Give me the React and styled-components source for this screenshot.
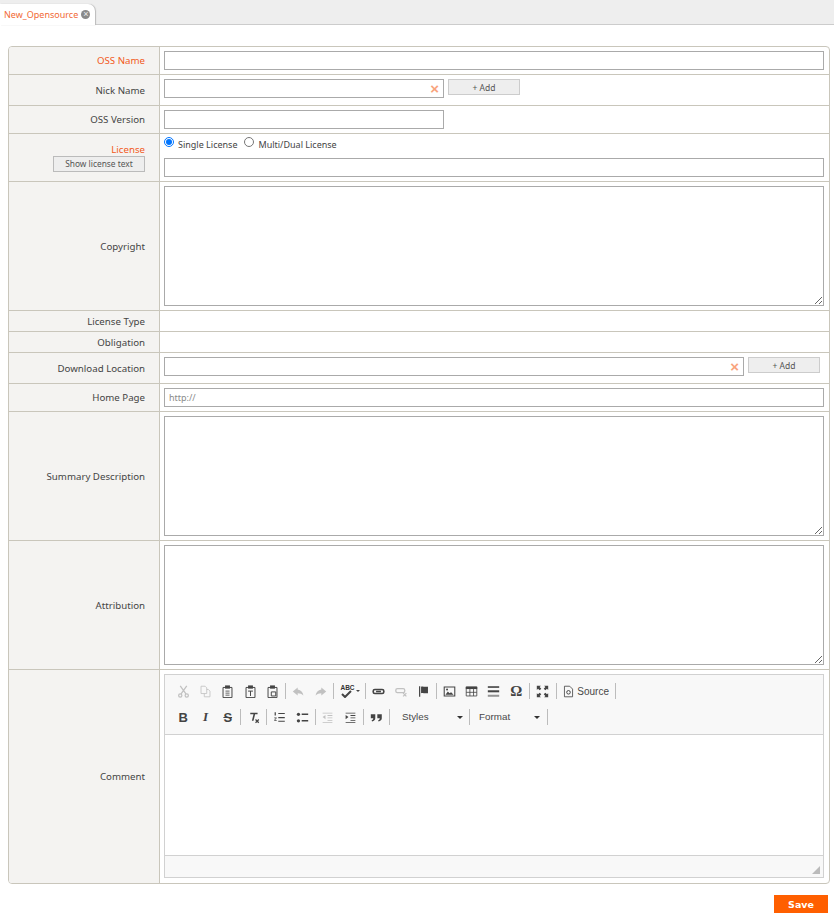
import React from "react";
import styled, { createGlobalStyle } from "styled-components";

const Global = createGlobalStyle`
  html, body { margin: 0; padding: 0; background: #fff; }
  body { font-family: "Noto Sans", Verdana, sans-serif; font-size: 10px; color: #444; height: 918px; overflow: hidden; }
`;

const TabBar = styled.div`
  height: 24px; background: #eee; border-bottom: 1px solid #ccc; display: flex; align-items: flex-end;
`;
const Tab = styled.div`
  width: 95px; height: 21px; background: #fff; border-radius: 0 7px 0 0; display: flex; align-items: center;
  gap: 3px; padding-left: 4px; box-sizing: border-box; margin-bottom: -1px; color: #f26a35; font-family: "Noto Sans", sans-serif; font-size: 9px;
  box-shadow: 1px 0 1px #bbb; white-space: nowrap;
`;
const TabClose = styled.span`
  width: 9px; height: 9px; flex: none; border-radius: 50%; background: #8a8a8a; color: #eee; font: 9px/9px "Liberation Sans", sans-serif; text-align: center;
`;

const Card = styled.div`
  margin: 21px 4px 0 8px; border: 1px solid #c9c6bb; border-radius: 4px; overflow: hidden;
`;
const Row = styled.div`
  display: grid; grid-template-columns: 151px 1fr; height: ${p => p.$h}px;
  border-bottom: ${p => (p.$last ? "0" : "1px solid #c9c6bb")};
`;
const Label = styled.div`
  background: #f4f3f1; border-right: 1px solid #c9c6bb; color: ${p => (p.$req ? "#f25a1c" : "#444")};
  display: flex; flex-direction: column; justify-content: center; align-items: flex-end; padding-right: 14px;
  white-space: nowrap; font-family: "Noto Sans", sans-serif; font-size: 9.7px;
`;
const Value = styled.div`
  padding: ${p => p.$pt ?? 4}px 5px 0 4px; display: flex; align-items: flex-start; gap: 4px; flex-wrap: wrap; align-content: flex-start;
`;
const Input = styled.input`
  box-sizing: border-box; height: 19px; width: ${p => (p.$w ? p.$w + "px" : "100%")}; border: 1px solid #aaa; padding: 0 4px; margin: 0;
  font: 9px "Noto Sans", sans-serif; background: #fff; color: #444;
  &::placeholder { color: #8a8a8a; opacity: 1; }
`;
const InputWrap = styled.div`
  position: relative; width: ${p => p.$w}px; height: 19px;
`;
const ClearX = styled.span`
  position: absolute; right: 5px; top: 2px; color: #f9a47d; font: bold 15px/15px "Liberation Sans", sans-serif;
`;
const AddBtn = styled.button`
  box-sizing: border-box; width: 72px; height: 16px; background: #eee; border: 1px solid #ccc; color: #555; padding: 0;
  font: 8.5px "Noto Sans", sans-serif;
`;
const ShowBtn = styled.button`
  box-sizing: border-box; width: 92px; height: 16px; background: #eee; border: 1px solid #bbb; color: #555; padding: 0; margin-bottom: 1px;
  font: 8.4px "Noto Sans", sans-serif;
`;
const RadioLine = styled.div`
  width: 100%; height: 20px; display: flex; align-items: center; font: 9px "Noto Sans", sans-serif; color: #444;
`;
const Radio = styled.input.attrs({ type: "radio", name: "lic" })`
  margin: 0 4px 4px 0; width: 10px; height: 10px; flex: none;
`;
const RadioText = styled.span`
  margin-right: 7px;
`;
const Area = styled.textarea`
  box-sizing: border-box; display: block; width: 100%; height: 120px; border: 1px solid #aaa; margin: 0; padding: 2px; background: #fff;
`;

const Editor = styled.div`
  box-sizing: border-box; width: 100%; height: 204px; border: 1px solid #d1d1d1; display: flex; flex-direction: column;
`;
const Toolbar = styled.div`
  height: 60px; box-sizing: border-box; background: #f8f8f8; border-bottom: 1px solid #d1d1d1; padding: 3px 0 0 7px;
`;
const TRow = styled.div`
  display: flex; align-items: center; height: 26px;
`;
const Btn = styled.span`
  width: ${p => p.$w || 22.3}px; height: 22px; display: flex; align-items: center; justify-content: center; flex: none;
  opacity: ${p => (p.$off ? 0.3 : 1)}; color: #333;
`;
const SourceBtn = styled(Btn)`
  justify-content: flex-start; padding-left: 4px; box-sizing: border-box; gap: 2px; font: 10px "Liberation Sans", sans-serif; color: #484848;
`;
const Sep = styled.span`
  width: 1px; height: 16px; background: #bcbcbc; margin: 0 1.2px 0 1.5px; flex: none;
`;
const Combo = styled.span`
  width: ${p => p.$w}px; height: 22px; display: flex; align-items: center; justify-content: space-between; padding: 0 ${p => p.$pr}px 2px ${p => p.$pl}px; box-sizing: border-box; flex: none;
  font: 9.8px "Liberation Sans", sans-serif; color: #484848;
  &::after { content: ""; border: 3px solid transparent; border-top-color: #333; border-bottom: 0; margin-top: 2px; }
`;
const EditBody = styled.div`
  flex: 1; background: #fff;
`;
const EditFoot = styled.div`
  box-sizing: border-box; height: 22px; background: #f8f8f8; border-top: 1px solid #d1d1d1; position: relative;
`;
const Grip = styled.span`
  position: absolute; right: 3px; bottom: 3px; width: 0; height: 0; border-left: 8px solid transparent; border-bottom: 8px solid #bbb;
`;
const Footer = styled.div`
  display: flex; justify-content: flex-end; padding: 11px 6px 0 0;
`;
const Save = styled.button`
  width: 54px; height: 18px; background: #ff5f00; color: #fff; border: 0; padding: 0; font: bold 9.5px "DejaVu Sans", sans-serif;
`;

const I = ({ children, s = 13 }) => <svg width={s} height={s} viewBox="0 0 16 16" fill="#444" stroke="none">{children}</svg>;
const Line = p => <path fill="none" stroke="#444" {...p} />;

const icons = {
  cut: <><Line d="M4 1l7 10M12 1L5 11" strokeWidth="1.5" /><circle cx="4" cy="13" r="2" fill="none" stroke="#444" strokeWidth="1.5" /><circle cx="12" cy="13" r="2" fill="none" stroke="#444" strokeWidth="1.5" /></>,
  copy: <Line d="M2.500 1.500h5l2 2v7h-7zM9.500 5.500h2l2 2v7h-7v-4" />,
  paste: <><Line d="M2.500 3h11v12.500h-11z" strokeWidth="1.200" /><path d="M5 .5h6v4H5z" /><Line d="M5.500 7.500h5M5.500 10h5M5.500 12.500h5" /></>,
  pasteT: <><Line d="M2.500 3h11v12.500h-11z" strokeWidth="1.200" /><path d="M5 .5h6v4H5z" /><Line d="M5 7.500h6M8 7.500v6" strokeWidth="1.200" /></>,
  pasteW: <><Line d="M2.500 3h11v12.500h-11z" strokeWidth="1.200" /><path d="M5 .5h6v4H5z" /><Line d="M6.500 8.500h5.500v5h-5.500z" strokeWidth="1.200" /></>,
  undo: <path d="M7 3L1 8l6 5v-3c3 0 5 1 7 3-.5-4-3-7-7-7.500z" />,
  redo: <path d="M9 3l6 5-6 5v-3c-3 0-5 1-7 3 .5-4 3-7 7-7.500z" />,
  link: <><rect x="1.500" y="5.500" width="13" height="5" rx="2" fill="none" stroke="#444" strokeWidth="2" /><path d="M5 7h6v2H5z" /></>,
  unlink: <><rect x="1" y="4.500" width="11" height="5" rx="2" fill="none" stroke="#444" strokeWidth="1.600" /><Line d="M10 10l4 4M14 10l-4 4" strokeWidth="1.500" /></>,
  flag: <><path d="M2.500 1.500h1.500v13H2.500z" /><path d="M5 2c2-1 4 1 8.500 0v8c-4.500 1-6.500-1-8.500 0z" /></>,
  image: <><Line d="M1.500 2.500h13v11h-13z" strokeWidth="1.300" /><path d="M3 12l3-4 2 2 2-1 3 3z" /><circle cx="5" cy="5.500" r="1.200" /></>,
  table: <><path d="M1 2h14v3H1z" /><Line d="M1.500 2.500h13v11h-13zM1.500 9h13M6 5v8.500M10.500 5v8.500" /></>,
  hr: <><path d="M1 1.500h14v2H1z" /><path d="M1 6.500h14v2.500H1z" /><path d="M1 12h14v2.500H1z" opacity=".55" /></>,
  max: <path d="M1 1h5L4.500 2.500 6.500 4.500 4.500 6.500 2.500 4.500 1 6zM15 1v5l-1.500-1.500-2 2-2-2 2-2L10 1zM1 15v-5l1.500 1.500 2-2 2 2-2 2L6 15zM15 15h-5l1.500-1.500-2-2 2-2 2 2L15 10z" />,
  src: <><Line d="M3 1.500h6.500l3.500 3.500v9.500H3z" /><circle cx="8" cy="9" r="2.200" fill="none" stroke="#444" strokeWidth="1.200" /></>,
  clear: <><path d="M4 2h9v2H10L8 12H6l2-8H4z" /><Line d="M10.500 10.500l4 4M14.500 10.500l-4 4" strokeWidth="1.500" /></>,
  ol: <><path d="M2 1.500h1.500v4H2zM1.500 8h3v1l-2 2h2v1h-3v-1l2-2h-2z" /><path d="M6.500 2.500h8v1.300h-8zM6.500 7.500h8v1.300h-8zM6.500 12h8v1.300h-8z" /></>,
  ul: <><circle cx="3" cy="4" r="2" /><circle cx="3" cy="12" r="2" /><path d="M7 3h8v2H7zM7 11h8v2H7z" /></>,
  outdent: <path d="M2 2h12v1H2zM8 5h6v1H8zM8 8h6v1H8zM8 11h6v1H8zM2 13.500h12v1H2zM5.500 5v5L2 7.500z" />,
  indent: <path d="M2 2h12v1H2zM8 5h6v1H8zM8 8h6v1H8zM8 11h6v1H8zM2 13.500h12v1H2zM2 5v5l3.500-2.500z" />,
  quote: <path d="M1 4h5.500v5c0 2-1.500 3.500-4 4l-.5-1.500c1.500-.5 2-1 2-2.500H1zM9 4h5.500v5c0 2-1.500 3.500-4 4l-.5-1.500c1.500-.5 2-1 2-2.500H9z" />,
};

const Ic = ({ n, off, w }) => <Btn $off={off} $w={w}><I>{icons[n]}</I></Btn>;
const Glyph = styled(Btn)`
  font: ${p => p.$f} ${p => p.$size || 13}px "Liberation ${p => p.$fam || "Sans"}", sans-serif; color: #444;
  text-decoration: ${p => (p.$strike ? "line-through" : "none")};
`;
const Spell = styled(Btn)`
  position: relative; font: bold 6.5px "Liberation Sans", sans-serif; justify-content: flex-start; padding-left: 5px; box-sizing: border-box;
  align-items: flex-start; padding-top: 4px;
  &::after { content: ""; position: absolute; right: 4px; top: 10px; border: 2.5px solid transparent; border-top-color: #444; border-bottom: 0; }
`;
const Check = styled.svg`
  position: absolute; left: 6px; top: 10px;
`;

const Field = ({ label, req, h, children, pt, last }) => (
  <Row $h={h} $last={last}>
    <Label $req={req}>{label}</Label>
    <Value $pt={pt}>{children}</Value>
  </Row>
);

export default function App() {
  return (
    <>
      <Global />
      <TabBar>
        <Tab>New_Opensource<TabClose>×</TabClose></Tab>
      </TabBar>
      <Card>
        <Field label="OSS Name" req h={27}><Input /></Field>
        <Field label="Nick Name" h={30}>
          <InputWrap $w={280}><Input /><ClearX>×</ClearX></InputWrap>
          <AddBtn>+ Add</AddBtn>
        </Field>
        <Field label="OSS Version" h={27}><Input $w={280} /></Field>
        <Row $h={47}>
          <Label $req>
            <span>License</span>
            <ShowBtn>Show license text</ShowBtn>
          </Label>
          <Value $pt={0}>
            <RadioLine>
              <Radio defaultChecked /><RadioText>Single License</RadioText>
              <Radio /><RadioText>Multi/Dual License</RadioText>
            </RadioLine>
            <Input />
          </Value>
        </Row>
        <Field label="Copyright" h={128}><Area /></Field>
        <Field label="License Type" h={20} />
        <Field label="Obligation" h={20} />
        <Field label="Download Location" h={30}>
          <InputWrap $w={580}><Input /><ClearX>×</ClearX></InputWrap>
          <AddBtn>+ Add</AddBtn>
        </Field>
        <Field label="Home Page" h={27}><Input placeholder="http://" /></Field>
        <Field label="Summary Description" h={128}><Area /></Field>
        <Field label="Attribution" h={128}><Area /></Field>
        <Field label="Comment" h={213} last>
          <Editor>
            <Toolbar>
              <TRow>
                <Ic n="cut" off /><Ic n="copy" off /><Ic n="paste" /><Ic n="pasteT" /><Ic n="pasteW" /><Sep />
                <Ic n="undo" off /><Ic n="redo" off /><Sep />
                <Spell $w={28.500}>ABC<Check width="12" height="8" viewBox="0 0 12 8"><path d="M1 4l3 3 6-6" fill="none" stroke="#444" strokeWidth="2" /></Check></Spell><Sep />
                <Ic n="link" /><Ic n="unlink" off /><Ic n="flag" /><Sep />
                <Ic n="image" /><Ic n="table" /><Ic n="hr" /><Glyph $f="bold" $fam="Serif" $size={15}>Ω</Glyph><Sep />
                <Ic n="max" w={23.500} /><Sep />
                <SourceBtn $w={55}><I>{icons.src}</I>Source</SourceBtn><Sep />
              </TRow>
              <TRow>
                <Glyph $f="bold">B</Glyph><Glyph $f="italic bold" $fam="Serif">I</Glyph><Glyph $f="bold" $strike>S</Glyph><Sep />
                <Ic n="clear" /><Sep />
                <Ic n="ol" /><Ic n="ul" /><Sep />
                <Ic n="outdent" off /><Ic n="indent" /><Sep />
                <Ic n="quote" /><Sep />
                <Combo $w={76.300} $pl={10.800} $pr={4.500}>Styles</Combo><Sep />
                <Combo $w={74} $pl={8} $pr={5}>Format</Combo><Sep />
              </TRow>
            </Toolbar>
            <EditBody />
            <EditFoot><Grip /></EditFoot>
          </Editor>
        </Field>
      </Card>
      <Footer><Save>Save</Save></Footer>
    </>
  );
}
